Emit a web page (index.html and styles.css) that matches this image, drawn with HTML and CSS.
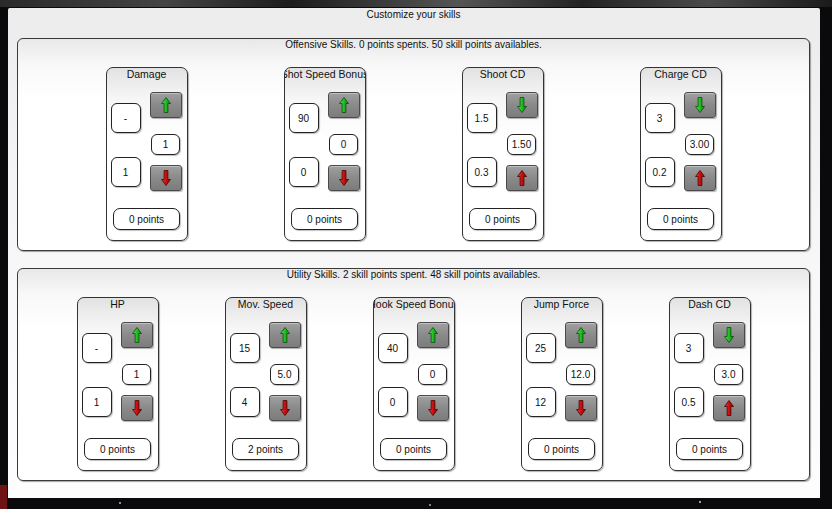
FILE: index.html
```html
<!DOCTYPE html>
<html lang="en">
<head>
    <meta charset="UTF-8">
    <title>Customize your skills</title>
    <link rel="stylesheet" href="styles.css">
</head>
<body>
    <svg class="defs" width="0" height="0">
        <defs>
            <linearGradient id="green" x1="0" x2="1" y1="0" y2="0">
                <stop offset="0" stop-color="#5fe85f"/>
                <stop offset="0.5" stop-color="#1dbd1d"/>
                <stop offset="1" stop-color="#0c8a0c"/>
            </linearGradient>
            <linearGradient id="red" x1="0" x2="1" y1="0" y2="0">
                <stop offset="0" stop-color="#f04040"/>
                <stop offset="0.5" stop-color="#cc0c0c"/>
                <stop offset="1" stop-color="#8c0606"/>
            </linearGradient>
            <symbol id="up-green" viewBox="0 0 10 16">
                <polygon points="5,0.5 9.5,6.5 6.9,6.5 6.9,15.5 3.1,15.5 3.1,6.5 0.5,6.5" fill="url(#green)" stroke="#0b4d0b" stroke-width="0.8" stroke-linejoin="round"/>
            </symbol>
            <symbol id="down-green" viewBox="0 0 10 16">
                <polygon points="5,15.5 9.5,9.5 6.9,9.5 6.9,0.5 3.1,0.5 3.1,9.5 0.5,9.5" fill="url(#green)" stroke="#0b4d0b" stroke-width="0.8" stroke-linejoin="round"/>
            </symbol>
            <symbol id="up-red" viewBox="0 0 10 16">
                <polygon points="5,0.5 9.5,6.5 6.9,6.5 6.9,15.5 3.1,15.5 3.1,6.5 0.5,6.5" fill="url(#red)" stroke="#4d0303" stroke-width="0.8" stroke-linejoin="round"/>
            </symbol>
            <symbol id="down-red" viewBox="0 0 10 16">
                <polygon points="5,15.5 9.5,9.5 6.9,9.5 6.9,0.5 3.1,0.5 3.1,9.5 0.5,9.5" fill="url(#red)" stroke="#4d0303" stroke-width="0.8" stroke-linejoin="round"/>
            </symbol>
        </defs>
    </svg>

    <div class="window">
        <div class="window-title">Customize your skills</div>

        <!-- Offensive skills -->
        <div class="panel">
            <div class="panel-title">Offensive Skills. 0 points spents. 50 skill points availables.</div>
            <div class="cards offensive">
                <div class="card">
                    <div class="card-title"><span>Damage</span></div>
                    <div class="controls">
                        <div class="col-values">
                            <div class="box">-</div>
                            <div class="box">1</div>
                        </div>
                        <div class="col-buttons">
                            <div class="btn"><svg class="arrow"><use href="#up-green"/></svg></div>
                            <div class="mid">1</div>
                            <div class="btn"><svg class="arrow"><use href="#down-red"/></svg></div>
                        </div>
                    </div>
                    <div class="points">0 points</div>
                </div>
                <div class="card">
                    <div class="card-title"><span>Shot Speed Bonus</span></div>
                    <div class="controls">
                        <div class="col-values">
                            <div class="box">90</div>
                            <div class="box">0</div>
                        </div>
                        <div class="col-buttons">
                            <div class="btn"><svg class="arrow"><use href="#up-green"/></svg></div>
                            <div class="mid">0</div>
                            <div class="btn"><svg class="arrow"><use href="#down-red"/></svg></div>
                        </div>
                    </div>
                    <div class="points">0 points</div>
                </div>
                <div class="card">
                    <div class="card-title"><span>Shoot CD</span></div>
                    <div class="controls">
                        <div class="col-values">
                            <div class="box">1.5</div>
                            <div class="box">0.3</div>
                        </div>
                        <div class="col-buttons">
                            <div class="btn"><svg class="arrow"><use href="#down-green"/></svg></div>
                            <div class="mid">1.50</div>
                            <div class="btn"><svg class="arrow"><use href="#up-red"/></svg></div>
                        </div>
                    </div>
                    <div class="points">0 points</div>
                </div>
                <div class="card">
                    <div class="card-title"><span>Charge CD</span></div>
                    <div class="controls">
                        <div class="col-values">
                            <div class="box">3</div>
                            <div class="box">0.2</div>
                        </div>
                        <div class="col-buttons">
                            <div class="btn"><svg class="arrow"><use href="#down-green"/></svg></div>
                            <div class="mid">3.00</div>
                            <div class="btn"><svg class="arrow"><use href="#up-red"/></svg></div>
                        </div>
                    </div>
                    <div class="points">0 points</div>
                </div>
            </div>
        </div>

        <!-- Utility skills -->
        <div class="panel">
            <div class="panel-title">Utility Skills. 2 skill points spent. 48 skill points availables.</div>
            <div class="cards utility">
                <div class="card">
                    <div class="card-title"><span>HP</span></div>
                    <div class="controls">
                        <div class="col-values">
                            <div class="box">-</div>
                            <div class="box">1</div>
                        </div>
                        <div class="col-buttons">
                            <div class="btn"><svg class="arrow"><use href="#up-green"/></svg></div>
                            <div class="mid">1</div>
                            <div class="btn"><svg class="arrow"><use href="#down-red"/></svg></div>
                        </div>
                    </div>
                    <div class="points">0 points</div>
                </div>
                <div class="card">
                    <div class="card-title"><span>Mov. Speed</span></div>
                    <div class="controls">
                        <div class="col-values">
                            <div class="box">15</div>
                            <div class="box">4</div>
                        </div>
                        <div class="col-buttons">
                            <div class="btn"><svg class="arrow"><use href="#up-green"/></svg></div>
                            <div class="mid">5.0</div>
                            <div class="btn"><svg class="arrow"><use href="#down-red"/></svg></div>
                        </div>
                    </div>
                    <div class="points">2 points</div>
                </div>
                <div class="card">
                    <div class="card-title"><span>Hook Speed Bonus</span></div>
                    <div class="controls">
                        <div class="col-values">
                            <div class="box">40</div>
                            <div class="box">0</div>
                        </div>
                        <div class="col-buttons">
                            <div class="btn"><svg class="arrow"><use href="#up-green"/></svg></div>
                            <div class="mid">0</div>
                            <div class="btn"><svg class="arrow"><use href="#down-red"/></svg></div>
                        </div>
                    </div>
                    <div class="points">0 points</div>
                </div>
                <div class="card">
                    <div class="card-title"><span>Jump Force</span></div>
                    <div class="controls">
                        <div class="col-values">
                            <div class="box">25</div>
                            <div class="box">12</div>
                        </div>
                        <div class="col-buttons">
                            <div class="btn"><svg class="arrow"><use href="#up-green"/></svg></div>
                            <div class="mid">12.0</div>
                            <div class="btn"><svg class="arrow"><use href="#down-red"/></svg></div>
                        </div>
                    </div>
                    <div class="points">0 points</div>
                </div>
                <div class="card">
                    <div class="card-title"><span>Dash CD</span></div>
                    <div class="controls">
                        <div class="col-values">
                            <div class="box">3</div>
                            <div class="box">0.5</div>
                        </div>
                        <div class="col-buttons">
                            <div class="btn"><svg class="arrow"><use href="#down-green"/></svg></div>
                            <div class="mid">3.0</div>
                            <div class="btn"><svg class="arrow"><use href="#up-red"/></svg></div>
                        </div>
                    </div>
                    <div class="points">0 points</div>
                </div>
            </div>
        </div>
    </div>
</body>
</html>
```

FILE: styles.css
```css
body {
    margin: 0;
    height: 509px;
    overflow: hidden;
    font-family: "Liberation Sans", Arial, sans-serif;
    font-size: 10px;
    color: #111;
    background:
        linear-gradient(#6e1414, #6e1414) no-repeat 0 485px / 7px 24px,
        linear-gradient(90deg, #2a2a2a, #444 20%, #1c1c1c 35%, #555 55%, #222 70%, #4a4a4a 85%, #1a1a1a) no-repeat 0 0 / 100% 7px,
        radial-gradient(circle at 120px 503px, #aab 0.6px, transparent 1.2px),
        radial-gradient(circle at 430px 505px, #99a 0.6px, transparent 1.2px),
        radial-gradient(circle at 700px 502px, #bbc 0.6px, transparent 1.2px),
        #0a0a0d;
}
.defs {
    position: absolute;
}
.window {
    width: 812px;
    height: 490px;
    margin: 8px 0 0 8px;
    padding: 0 10px 0 9px;
    box-sizing: border-box;
    background: linear-gradient(#ececec, #f6f6f6 45%, #fdfdfd);
    border-radius: 2px 2px 0 0;
}
.window-title {
    height: 30px;
    line-height: 14px;
    text-align: center;
}
.panel {
    border: 1px solid #3a3a3a;
    border-radius: 6px;
    background: linear-gradient(#e8e8e8, #f8f8f8 25px, #fff 60px);
    box-shadow: 1px 1px 1px rgba(0, 0, 0, 0.35);
    padding-bottom: 9px;
}
.panel + .panel {
    margin-top: 17px;
}
.panel-title {
    line-height: 12px;
    text-align: center;
    margin-bottom: 16px;
}
.cards {
    display: flex;
    justify-content: center;
}
.offensive {
    gap: 96px;
}
.utility {
    gap: 66px;
}
.card {
    width: 82px;
    box-sizing: border-box;
    border: 1px solid #333;
    border-radius: 7px;
    background: linear-gradient(#e2e2e2, #f6f6f6 30px, #fff 70px);
    box-shadow: 1px 1px 1px rgba(0, 0, 0, 0.3);
    padding-bottom: 10px;
}
.card-title {
    display: flex;
    justify-content: center;
    overflow: hidden;
    white-space: nowrap;
    height: 12px;
    line-height: 12px;
    font-size: 10.5px;
}
.controls {
    display: flex;
    justify-content: space-between;
    height: 100px;
    margin-top: 12px;
    padding: 0 5px 0 4px;
}
.col-values {
    display: flex;
    flex-direction: column;
    gap: 24px;
    padding-top: 11px;
}
.col-buttons {
    display: flex;
    flex-direction: column;
    align-items: center;
    width: 32px;
}
.box, .mid, .points {
    display: flex;
    align-items: center;
    justify-content: center;
    box-sizing: border-box;
    background: #fff;
    border: 1px solid #222;
    box-shadow: 1px 1px 1px rgba(0, 0, 0, 0.25);
}
.box {
    width: 30px;
    height: 30px;
    border-radius: 6px;
}
.mid {
    width: 29px;
    height: 21px;
    margin: 16px 0 10px;
    border-radius: 6px;
}
.points {
    width: 67px;
    height: 22px;
    margin: 16px auto 0;
    border-radius: 7px;
}
.btn {
    display: flex;
    align-items: center;
    justify-content: center;
    width: 32px;
    height: 26px;
    box-sizing: border-box;
    border: 1px solid #4a4a4a;
    border-radius: 3px;
    background: linear-gradient(#a0a0a0, #8a8a8a 50%, #7c7c7c);
    box-shadow: inset 0 1px 0 rgba(255, 255, 255, 0.35), 1px 1px 1px rgba(0, 0, 0, 0.3);
}
.arrow {
    width: 10px;
    height: 16px;
}
```
